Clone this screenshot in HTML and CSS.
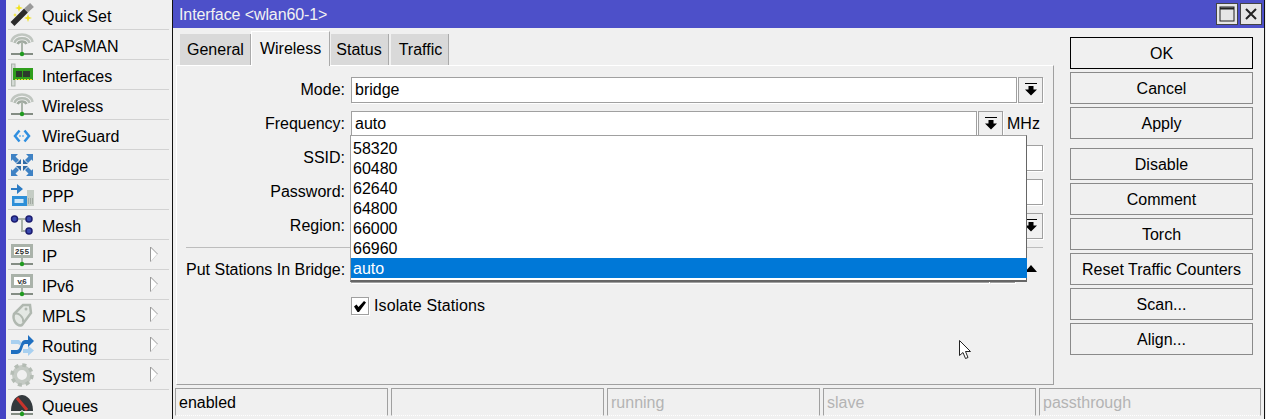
FILE: index.html
```html
<!DOCTYPE html>
<html lang="en">
<head>
<meta charset="utf-8">
<title>Interface &lt;wlan60-1&gt;</title>
<link rel="stylesheet" href="styles.css">
</head>
<body>
<svg class="defs" width="0" height="0" aria-hidden="true">
  <defs>
    <symbol id="mast" viewBox="0 0 30 30">
      <path d="M3 24H25" stroke="#5f6b5f" stroke-width="1.500"/>
      <path d="M14 13V24" stroke="#aab4aa" stroke-width="2"/>
      <circle cx="14" cy="24" r="2.200" fill="#1f9a1f"/>
    </symbol>
    <symbol id="antenna" viewBox="0 0 30 30">
      <path d="M3.500 12C5 2 23 2 24.500 12" fill="none" stroke="#c0c6c0" stroke-width="2.500"/>
      <path d="M6.500 13C8 6.500 20 6.500 21.500 13" fill="none" stroke="#b4bcb4" stroke-width="2.500"/>
      <path d="M9.500 14C11 10.500 17 10.500 18.500 14" fill="none" stroke="#a0aaa0" stroke-width="2.500"/>
      <use href="#mast"/>
    </symbol>
    <symbol id="monitor" viewBox="0 0 30 30">
      <rect x="4.500" y="5.500" width="19" height="11" fill="#fff" stroke="#a9b2a9" stroke-width="3"/>
      <use href="#mast"/>
    </symbol>
    <symbol id="down" viewBox="0 0 12 14">
      <path d="M0 0.500H12" stroke="#000"/>
      <path d="M3.500 3H8.500V6.500H12L6 12.500L0 6.500H3.500Z" fill="#000"/>
    </symbol>
    <symbol id="chevron" viewBox="0 0 10 18">
      <path d="M1.500 1L8.500 8L1.500 16Z" fill="#fff"/>
      <path d="M1.500 16V1L8.500 8" fill="none" stroke="#999"/>
      <path d="M8.500 8L1.500 16" fill="none" stroke="#d8d8d8"/>
    </symbol>
  </defs>
</svg>

<nav class="sidebar">
  <div class="item">
    <svg class="ico" viewBox="0 0 30 30">
      <path d="M4.500 24L18 10.500" stroke="#2b2b2b" stroke-width="5.500"/>
      <path d="M18 10.500L24 5" stroke="#9a9a9a" stroke-width="5.500"/>
      <path d="M11 4L12 7L15 8L12 9L11 12L10 9L7 8L10 7Z" fill="#f2e21c"/>
      <path d="M20 14L21 17L24 18L21 19L20 22L19 19L16 18L19 17Z" fill="#f2e21c"/>
      <path d="M7 13L7.600 14.400L9 15L7.600 15.600L7 17L6.400 15.600L5 15L6.400 14.400Z" fill="#f2e21c"/>
    </svg>
    <span class="name">Quick Set</span>
  </div>
  <div class="item"><svg class="ico"><use href="#antenna"/></svg><span class="name">CAPsMAN</span></div>
  <div class="item">
    <svg class="ico" viewBox="0 0 30 30">
      <rect x="3.500" y="4" width="3.500" height="22" fill="#d4dad4" stroke="#a9b2a9"/>
      <rect x="5" y="8" width="20" height="12" fill="#2f9e1c"/>
      <rect x="8" y="11" width="6" height="6" fill="#2c3a2c"/>
      <rect x="15" y="11" width="7" height="6" fill="#2c3a2c"/>
      <path d="M7 19.500H25" stroke="#e8d82c" stroke-dasharray="2 1"/>
    </svg>
    <span class="name">Interfaces</span>
  </div>
  <div class="item"><svg class="ico"><use href="#antenna"/></svg><span class="name">Wireless</span></div>
  <div class="item">
    <svg class="ico" viewBox="0 0 30 30">
      <path d="M11.500 10.500L7 16L11.500 21.500" fill="none" stroke="#2f8fe0" stroke-width="2.500"/>
      <path d="M16.500 10.500L21 16L16.500 21.500" fill="none" stroke="#2f8fe0" stroke-width="2.500"/>
      <path d="M11 16H17" stroke="#6fb4ea" stroke-width="1.500" stroke-dasharray="2 1"/>
    </svg>
    <span class="name">WireGuard</span>
  </div>
  <div class="item">
    <svg class="ico" viewBox="0 0 30 30">
      <g fill="#3f82c4">
        <path d="M3 4H10L7.500 6.500L11 10L8 13L4.500 9.500L3 11Z"/>
        <path d="M25 4H18L20.500 6.500L17 10L20 13L23.500 9.500L25 11Z"/>
        <path d="M3 26H10L7.500 23.500L11 20L8 17L4.500 20.500L3 19Z"/>
        <path d="M25 26H18L20.500 23.500L17 20L20 17L23.500 20.500L25 19Z"/>
      </g>
      <g fill="#2f6aa6">
        <path d="M13 14V9L8 14Z"/>
        <path d="M15 14V9L20 14Z"/>
        <path d="M13 16V21L8 16Z"/>
        <path d="M15 16V21L20 16Z"/>
      </g>
    </svg>
    <span class="name">Bridge</span>
  </div>
  <div class="item">
    <svg class="ico" viewBox="0 0 30 30">
      <path d="M3 8H9V4L15 9L9 14V10H3Z" fill="#2d7cc4"/>
      <rect x="19" y="10" width="7" height="16" fill="#c4ccc4"/>
      <path d="M20 19H25M20 21H25M20 23H25" stroke="#808880" stroke-dasharray="1 1"/>
      <rect x="4" y="16" width="15" height="10" fill="#2d8fd8"/>
      <rect x="6.500" y="19" width="9" height="4" fill="#cfe6f6"/>
    </svg>
    <span class="name">PPP</span>
  </div>
  <div class="item">
    <svg class="ico" viewBox="0 0 30 30">
      <path d="M6.500 9H21M14 9V21H21" fill="none" stroke="#a9b2a9" stroke-width="2"/>
      <circle cx="6.500" cy="9" r="3" fill="#3a4ab0" stroke="#1c1c70" stroke-width="1.500"/>
      <circle cx="21" cy="9" r="3" fill="#3a4ab0" stroke="#1c1c70" stroke-width="1.500"/>
      <circle cx="21" cy="21" r="3" fill="#3a4ab0" stroke="#1c1c70" stroke-width="1.500"/>
    </svg>
    <span class="name">Mesh</span>
  </div>
  <div class="item">
    <svg class="ico" viewBox="0 0 30 30">
      <use href="#monitor"/>
      <text class="mini" x="14" y="14" text-anchor="middle">255</text>
    </svg>
    <span class="name">IP</span>
    <svg class="chev"><use href="#chevron"/></svg>
  </div>
  <div class="item">
    <svg class="ico" viewBox="0 0 30 30">
      <use href="#monitor"/>
      <text class="mini" x="14" y="14" text-anchor="middle">v6</text>
    </svg>
    <span class="name">IPv6</span>
    <svg class="chev"><use href="#chevron"/></svg>
  </div>
  <div class="item">
    <svg class="ico" viewBox="0 0 30 30">
      <path d="M6 14L15 5L22 5L23 13L14 25C9 27 4 20 6 14Z" fill="#e4e8e4" stroke="#b0b8b0" stroke-width="2.500"/>
      <path d="M7 14C10 12 16 17 15 22" fill="none" stroke="#b0b8b0" stroke-width="2"/>
      <circle cx="18" cy="9" r="1.500" fill="#b0b8b0"/>
    </svg>
    <span class="name">MPLS</span>
    <svg class="chev"><use href="#chevron"/></svg>
  </div>
  <div class="item">
    <svg class="ico" viewBox="0 0 30 30">
      <path d="M3 10H11L14 13L12 15L10 14H3Z" fill="#a8d0f0"/>
      <path d="M15 19H20V15.500L26 20.500L20 26V23H15Z" fill="#a8d0f0"/>
      <path d="M3 20H9C13 20 12 10 17 10H20V5L26 11L20 17V14H17C14 14 15 24 9 24H3Z" fill="#1f6fc0"/>
    </svg>
    <span class="name">Routing</span>
    <svg class="chev"><use href="#chevron"/></svg>
  </div>
  <div class="item">
    <svg class="ico" viewBox="0 0 30 30">
      <circle cx="14" cy="15" r="7.500" fill="none" stroke="#c4cac4" stroke-width="5"/>
      <circle cx="14" cy="15" r="10" fill="none" stroke="#b4bcb4" stroke-width="3.500" stroke-dasharray="4 3.850"/>
    </svg>
    <span class="name">System</span>
    <svg class="chev"><use href="#chevron"/></svg>
  </div>
  <div class="item">
    <svg class="ico" viewBox="0 0 30 30">
      <path d="M3 21C3 9 10 5 14 5C18 5 25 9 25 21Z" fill="#33393d"/>
      <path d="M9 8L19 20" stroke="#c8342c" stroke-width="3"/>
      <path d="M3 24H25" stroke="#5f6b5f" stroke-width="1.500"/>
      <path d="M14 20V24" stroke="#aab4aa" stroke-width="2"/>
      <circle cx="14" cy="24" r="2.200" fill="#1f9a1f"/>
    </svg>
    <span class="name">Queues</span>
  </div>
</nav>

<main class="window">
  <header class="titlebar">
    <span class="title">Interface &lt;wlan60-1&gt;</span>
    <div class="winbtns">
      <button class="winbtn" aria-label="Maximize">
        <svg width="16" height="16" viewBox="0 0 16 16"><rect x="1" y="1" width="14" height="14" fill="none" stroke="#222"/><path d="M1 2.500H15" stroke="#222" stroke-width="2"/></svg>
      </button>
      <button class="winbtn" aria-label="Close">
        <svg width="14" height="14" viewBox="0 0 14 14"><path d="M2 2L12 12M12 2L2 12" stroke="#222" stroke-width="2"/></svg>
      </button>
    </div>
  </header>

  <div class="body">
    <section class="left">
      <div class="tabs">
        <div class="tab">General</div>
        <div class="tab active">Wireless</div>
        <div class="tab">Status</div>
        <div class="tab">Traffic</div>
      </div>
      <div class="panel">
        <div class="row">
          <label class="lbl">Mode:</label>
          <div class="field">bridge</div>
          <div class="drop"><svg class="arr"><use href="#down"/></svg></div>
        </div>
        <div class="row">
          <label class="lbl">Frequency:</label>
          <div class="field">auto</div>
          <div class="drop"><svg class="arr"><use href="#down"/></svg></div>
          <span class="unit">MHz</span>
        </div>
        <div class="row"><label class="lbl">SSID:</label><div class="field"></div></div>
        <div class="row"><label class="lbl">Password:</label><div class="field"></div></div>
        <div class="row">
          <label class="lbl">Region:</label>
          <div class="field"></div>
          <div class="drop"><svg class="arr"><use href="#down"/></svg></div>
        </div>
        <hr class="sep">
        <div class="row">
          <label class="lbl">Put Stations In Bridge:</label>
          <div class="field"></div>
          <div class="drop"></div>
          <div class="up"></div>
        </div>
        <div class="checkrow">
          <span class="box">
            <svg width="14" height="14" viewBox="0 0 14 14"><path d="M1 7.500L3.500 5.500L5.500 8L11 2L13 3.500L6 13H4.500Z" fill="#000"/></svg>
          </span>
          <span>Isolate Stations</span>
        </div>
      </div>
    </section>

    <aside class="actions">
      <div class="group">
        <button class="btn primary">OK</button>
        <button class="btn">Cancel</button>
        <button class="btn">Apply</button>
      </div>
      <div class="group">
        <button class="btn">Disable</button>
        <button class="btn">Comment</button>
        <button class="btn">Torch</button>
        <button class="btn">Reset Traffic Counters</button>
        <button class="btn">Scan...</button>
        <button class="btn">Align...</button>
      </div>
    </aside>
  </div>

  <footer class="status">
    <div class="cell">enabled</div>
    <div class="cell"></div>
    <div class="cell off">running</div>
    <div class="cell off">slave</div>
    <div class="cell off wide">passthrough</div>
  </footer>
</main>

<ul class="list">
  <li>58320</li>
  <li>60480</li>
  <li>62640</li>
  <li>64800</li>
  <li>66000</li>
  <li>66960</li>
  <li class="sel">auto</li>
</ul>

<svg class="cursor" width="14" height="20" viewBox="0 0 14 20">
  <path d="M0.500 0.500V15.500L4 12.500L6.500 18.500L9 17.500L6.500 11.500H11.500Z" fill="#fff" stroke="#222"/>
</svg>
</body>
</html>
```

FILE: styles.css
```css
* { box-sizing: border-box; }
html, body { height: 100%; }
body {
  margin: 0;
  display: flex;
  overflow: hidden;
  background: #f0f0f0;
  color: #000;
  font: 16px/20px "Liberation Sans", Arial, sans-serif;
}
.defs { position: absolute; }

/* sidebar */
.sidebar {
  width: 172px;
  flex: none;
  padding-right: 3px;
  border-left: 6px solid #4343c4;
  background: #f0f0f0;
}
.item {
  height: 30px;
  margin-left: 2px;
  padding-right: 10px;
  display: flex;
  align-items: center;
  border-bottom: 1px solid #d2d2d2;
}
.ico { width: 30px; height: 30px; flex: none; margin-right: 4px; }
.name { margin-top: 4px; }
.mini { font: bold 8px "Liberation Mono", monospace; fill: #333; }
.chev { width: 10px; height: 18px; margin-left: auto; }

/* window */
.window {
  flex: 1;
  min-width: 0;
  display: flex;
  flex-direction: column;
  border-left: 1px solid #111;
  border-right: 1px solid #111;
  margin-right: 1px;
}
.titlebar {
  height: 28px;
  flex: none;
  display: flex;
  align-items: center;
  justify-content: space-between;
  padding: 0 2px 0 6px;
  background: #4d50c9;
  color: #f2f2f2;
}
.title { margin-top: 2px; letter-spacing: -0.1px; }
.winbtns { display: flex; gap: 2px; }
.winbtn {
  width: 22px;
  height: 22px;
  padding: 0;
  display: flex;
  align-items: center;
  justify-content: center;
  background: #e6e6e6;
  border: 1px solid #444;
}
.body { flex: 1; display: flex; min-height: 0; }
.left { width: 881px; padding: 2px 0 0 3px; flex: none; display: flex; flex-direction: column; }

/* tabs */
.tabs { height: 35px; flex: none; display: flex; align-items: flex-end; padding-left: 4px; gap: 1px; }
.tab {
  height: 31px;
  padding: 1px 6px 0 7px;
  display: flex;
  align-items: center;
  background: #d9d9d9;
  border-right: 1px solid #aaa;
}
.tab.active {
  height: 35px;
  margin: 0 0 -1px -1px;
  padding: 0 8px 0 8px;
  background: #f0f0f0;
  border-top: 1px solid #fff;
  border-left: 1px solid #fff;
  position: relative;
}
.tab:nth-child(3) { padding-left: 5px; padding-right: 6px; }
.tab:nth-child(4) { margin-left: 1px; padding-left: 8px; padding-right: 6px; }

/* panel */
.panel {
  width: 878px;
  height: 320px;
  padding: 11px 10px 0 9px;
  border: 1px solid #fff;
  border-right-color: #a0a0a0;
  border-bottom-color: #a0a0a0;
}
.row { height: 26px; margin-bottom: 8px; display: flex; align-items: stretch; gap: 1px; }
.lbl { width: 159px; margin-right: 5px; flex: none; text-align: right; line-height: 26px; white-space: nowrap; }
.field {
  flex: 1;
  min-width: 0;
  padding: 2px 3px;
  background: #fff;
  border: 1px solid #a0a0a0;
  box-shadow: 1px 1px 0 #fff;
}
.drop {
  width: 25px;
  flex: none;
  display: flex;
  align-items: center;
  justify-content: center;
  border: 1px solid #a0a0a0;
  box-shadow: 1px 1px 0 #fff;
}
.arr { width: 12px; height: 14px; }
.unit { width: 39px; flex: none; padding-left: 3px; line-height: 26px; }
.up { width: 27px; flex: none; display: flex; align-items: center; justify-content: center; }
.up::before {
  content: "";
  border-left: 6px solid transparent;
  border-right: 6px solid transparent;
  border-bottom: 7px solid #000;
  margin: -4px 0 0 2px;
}
.sep { height: 1px; margin: 2px 0 9px; border: 0; background: #bdbdbd; }
.checkrow {
  height: 18px;
  margin: 14px 0 0 165px;
  display: flex;
  align-items: center;
  gap: 5px;
  letter-spacing: 0.1px;
}
.box {
  width: 18px;
  height: 18px;
  display: flex;
  align-items: center;
  justify-content: center;
  background: #fff;
  border: 1px solid #a0a0a0;
  box-shadow: 1px 1px 0 #fff;
}

/* action buttons */
.actions { width: 183px; margin: 9px 0 0 16px; flex: none; display: flex; flex-direction: column; gap: 9px; }
.group { display: flex; flex-direction: column; gap: 3px; }
.btn {
  height: 32px;
  padding: 2px 0 0;
  font: inherit;
  color: #000;
  background: #f0f0f0;
  border: 1px solid #8a8a8a;
  border-radius: 0;
}
.btn.primary { border-color: #000; }

/* status bar */
.status {
  height: 31px;
  flex: none;
  display: flex;
  gap: 3px;
  padding: 0 3px 3px 2px;
}
.cell {
  width: 213px;
  flex: none;
  padding: 4px 3px 2px;
  border-top: 1px solid #a0a0a0;
  border-left: 1px solid #a0a0a0;
  border-right: 1px solid #a0a0a0;
  border-bottom: 1px dotted #fff;
}
.cell.wide { flex: 1; }
.cell.off { color: #b4b4b4; }

/* open dropdown list */
.list {
  position: absolute;
  left: 350px;
  top: 135px;
  width: 677px;
  height: 147px;
  margin: 0;
  padding: 2px 0 0;
  list-style: none;
  background: #fff;
  border-top: 1px solid #a0a0a0;
  border-left: 1px solid #a0a0a0;
  border-right: 1px solid #666;
  border-bottom: 2px solid #666;
}
.list li { height: 20px; padding: 1px 0 0 2px; line-height: 20px; }
.list .sel { margin-right: -1px; background: #0078d7; color: #fff; }

.cursor { position: absolute; left: 959px; top: 340px; }
```
